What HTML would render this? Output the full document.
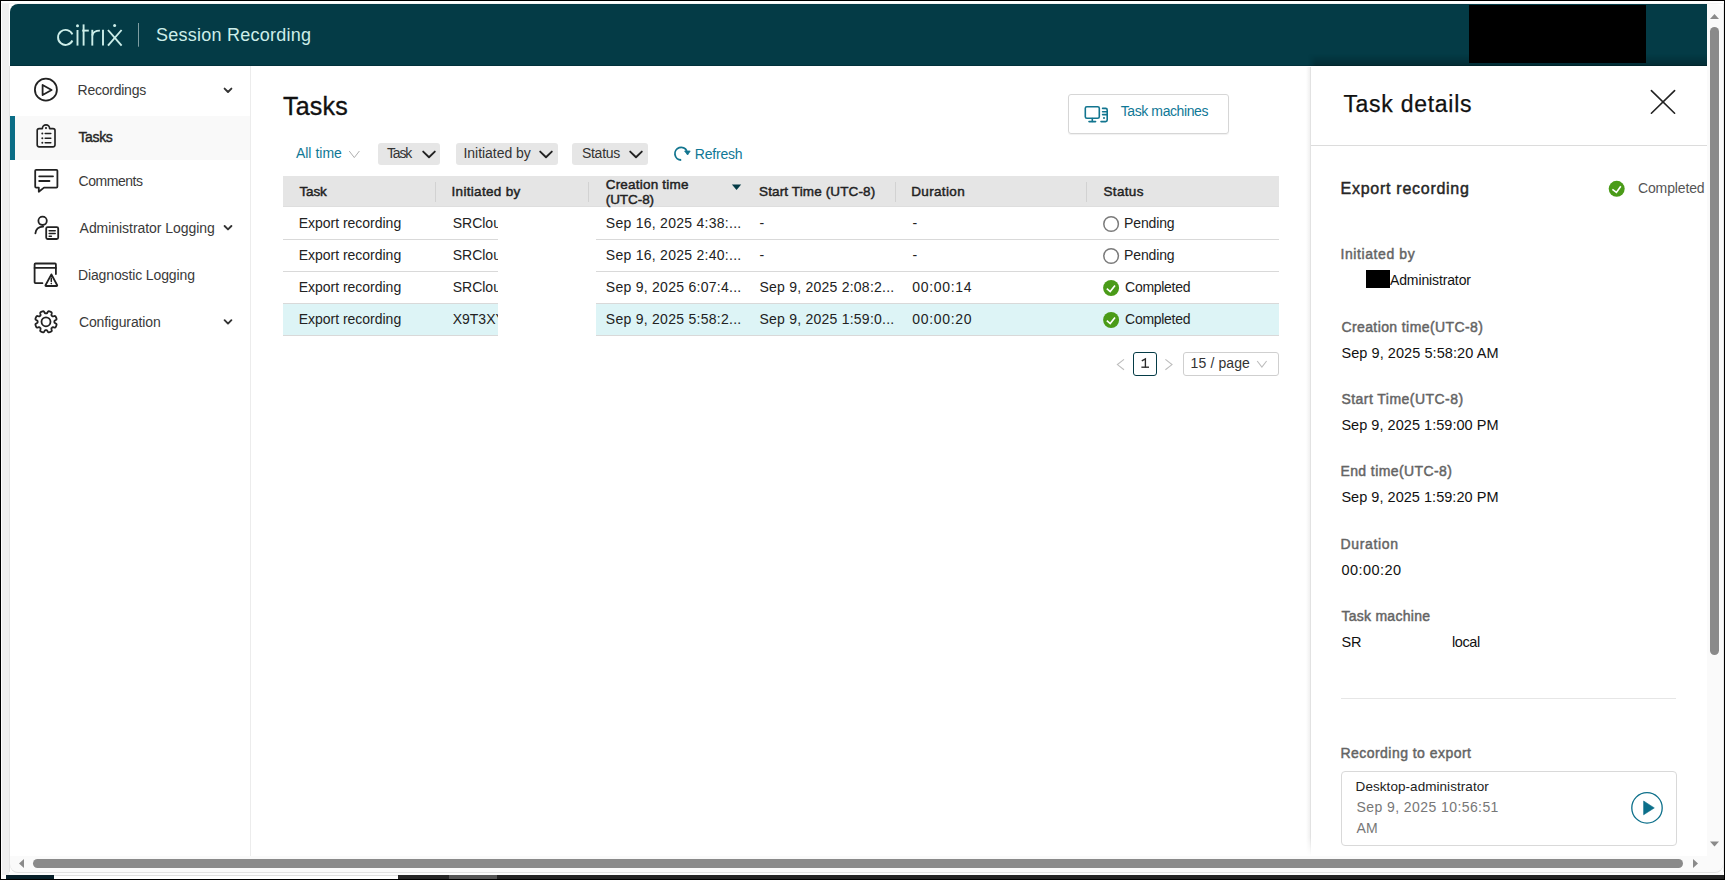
<!DOCTYPE html>
<html><head><meta charset="utf-8">
<style>
*{margin:0;padding:0;box-sizing:border-box}
html,body{width:1725px;height:880px;overflow:hidden;background:#fff;font-family:"Liberation Sans",sans-serif;color:#222}
.a{position:absolute}
.bt{position:absolute;white-space:nowrap;line-height:1;font-family:"Liberation Sans",sans-serif}
.clip{position:absolute;overflow:hidden}
svg.ov{position:absolute;left:0;top:0;width:1725px;height:880px;overflow:visible}
</style></head><body>
<!-- ===== outer frame ===== -->
<div class="a" style="left:0;top:0;width:1725px;height:1px;background:#000"></div>
<div class="a" style="left:0;top:0;width:1px;height:880px;background:#000"></div>
<div class="a" style="left:1724px;top:0;width:1px;height:880px;background:#000"></div>
<div class="a" style="left:2px;top:3px;width:7px;height:872px;background:#f0f0f0"></div>
<div class="a" style="left:9px;top:66px;width:1px;height:806px;background:#e4e4e4"></div>
<div class="a" style="left:1px;top:3px;width:1723px;height:1px;background:#f4f4f4"></div>
<div class="a" style="left:1723px;top:4px;width:1px;height:868px;background:#e8e8e8"></div>
<!-- bottom taskbar remnants -->
<div class="a" style="left:1px;top:879px;width:1724px;height:1px;background:#000"></div>
<div class="a" style="left:1px;top:875px;width:5px;height:4px;background:#fff"></div>
<div class="a" style="left:6px;top:875px;width:48px;height:4px;background:#071f29"></div>
<div class="a" style="left:54px;top:875px;width:344px;height:4px;background:#fff"></div>
<div class="a" style="left:54px;top:875px;width:344px;height:1px;background:#e0e0e0"></div>
<div class="a" style="left:398px;top:875px;width:51px;height:4px;background:#262626"></div>
<div class="a" style="left:449px;top:875px;width:48px;height:4px;background:#555"></div>
<div class="a" style="left:497px;top:875px;width:1227px;height:4px;background:#232323"></div>
<div class="a" style="left:2px;top:872px;width:1721px;height:3px;background:#fcfcfc"></div>
<div class="a" style="left:2px;top:872px;width:7px;height:3px;background:#f0f0f0"></div>
<!-- ===== header ===== -->
<div class="a" style="left:10px;top:4px;width:1697px;height:62px;background:#043b46;border-top-left-radius:8px"></div>
<div class="a" style="left:10px;top:65px;width:1697px;height:1px;background:#02313b"></div>
<div class="a" style="left:1308px;top:54px;width:399px;height:12px;background:linear-gradient(180deg,rgba(0,0,0,0),rgba(0,0,0,0.25));-webkit-mask-image:linear-gradient(90deg,transparent,#000 8px)"></div>
<div class="a" style="left:1469px;top:5px;width:177px;height:58px;background:#000"></div>

<!-- ===== sidebar ===== -->
<div class="a" style="left:250px;top:66px;width:1px;height:790px;background:#ececec"></div>
<div class="a" style="left:15px;top:116px;width:235px;height:44px;background:#f9f9f9"></div>
<div class="a" style="left:10px;top:116px;width:5px;height:44px;background:#0b6d86"></div>

<!-- ===== main ===== -->
<!-- chips -->
<div class="a" style="left:378px;top:143px;width:62px;height:22px;background:#e6e6e6;border-radius:3px"></div>
<div class="a" style="left:456px;top:143px;width:102px;height:22px;background:#e6e6e6;border-radius:3px"></div>
<div class="a" style="left:572px;top:143px;width:76px;height:22px;background:#e6e6e6;border-radius:3px"></div>
<!-- task machines button -->
<div class="a" style="left:1068px;top:94px;width:161px;height:40px;border:1px solid #d6d6d6;border-radius:3px;box-shadow:0 1px 1px rgba(0,0,0,0.06)"></div>
<!-- table -->
<div class="a" style="left:283px;top:176px;width:996px;height:31px;background:#e5e5e5"></div>
<div class="a" style="left:283px;top:206px;width:996px;height:1px;background:#dedede"></div>
<div class="a" style="left:283px;top:304px;width:996px;height:31px;background:#ddf4f6"></div>
<div class="a" style="left:283px;top:239px;width:996px;height:1px;background:#d9d9d9"></div>
<div class="a" style="left:283px;top:271px;width:996px;height:1px;background:#d9d9d9"></div>
<div class="a" style="left:283px;top:303px;width:996px;height:1px;background:#d9d9d9"></div>
<div class="a" style="left:283px;top:335px;width:996px;height:1px;background:#d9d9d9"></div>
<div class="a" style="left:435px;top:182px;width:1px;height:20px;background:#d2d2d2"></div>
<div class="a" style="left:588px;top:182px;width:1px;height:20px;background:#d2d2d2"></div>
<div class="a" style="left:895px;top:182px;width:1px;height:20px;background:#d2d2d2"></div>
<div class="a" style="left:1086px;top:182px;width:1px;height:20px;background:#d2d2d2"></div>
<!-- redaction white block -->
<div class="a" style="left:498px;top:207px;width:98px;height:130px;background:#fff"></div>
<!-- pagination -->
<div class="a" style="left:1133px;top:352px;width:24px;height:24px;border:1.5px solid #043b46;border-radius:3px"></div>
<div class="a" style="left:1183px;top:352px;width:96px;height:24px;border:1px solid #cfcfcf;border-radius:3px"></div>

<!-- ===== details panel ===== -->
<div class="a" style="left:1306px;top:67px;width:5px;height:789px;-webkit-mask-image:linear-gradient(180deg,#000 770px,transparent 789px)"><div class="a" style="left:0;top:0;width:4px;height:789px;background:linear-gradient(90deg,#fff,#f0f0f0)"></div><div class="a" style="left:4px;top:0;width:1px;height:789px;background:#e2e2e2"></div></div>
<div class="a" style="left:1311px;top:145px;width:396px;height:1px;background:#dcdcdc"></div>
<div class="a" style="left:1366px;top:270px;width:24px;height:18px;background:#000"></div>
<div class="a" style="left:1341px;top:698px;width:335px;height:1px;background:#e6e6e6"></div>
<div class="a" style="left:1341px;top:771px;width:336px;height:75px;border:1px solid #d9d9d9;border-radius:4px"></div>

<span class="bt" style="left:156.00px;top:26px;font-size:18px;font-weight:normal;color:#cdeee9;letter-spacing:0.245px">Session Recording</span>
<span class="bt" style="left:77.60px;top:83px;font-size:14px;font-weight:normal;color:#3a3a3a;letter-spacing:-0.246px">Recordings</span>
<span class="bt" style="left:78.40px;top:130px;font-size:14px;font-weight:normal;color:#262626;letter-spacing:-0.347px;-webkit-text-stroke:0.4px #262626">Tasks</span>
<span class="bt" style="left:78.60px;top:174px;font-size:14px;font-weight:normal;color:#3a3a3a;letter-spacing:-0.483px">Comments</span>
<span class="bt" style="left:79.60px;top:221px;font-size:14px;font-weight:normal;color:#3a3a3a;letter-spacing:-0.050px">Administrator Logging</span>
<span class="bt" style="left:77.90px;top:268px;font-size:14px;font-weight:normal;color:#3a3a3a;letter-spacing:-0.117px">Diagnostic Logging</span>
<span class="bt" style="left:78.90px;top:315px;font-size:14px;font-weight:normal;color:#3a3a3a;letter-spacing:-0.116px">Configuration</span>
<span class="bt" style="left:283.10px;top:94px;font-size:25px;font-weight:normal;color:#111;letter-spacing:0.174px;-webkit-text-stroke:0.35px #111">Tasks</span>
<span class="bt" style="left:295.90px;top:146px;font-size:14px;font-weight:normal;color:#0f7896;letter-spacing:0.013px">All time</span>
<span class="bt" style="left:386.90px;top:146px;font-size:14px;font-weight:normal;color:#333;letter-spacing:-1.129px">Task</span>
<span class="bt" style="left:463.50px;top:146px;font-size:14px;font-weight:normal;color:#333;letter-spacing:-0.046px">Initiated by</span>
<span class="bt" style="left:581.90px;top:146px;font-size:14px;font-weight:normal;color:#333;letter-spacing:-0.258px">Status</span>
<span class="bt" style="left:694.80px;top:147px;font-size:14px;font-weight:normal;color:#0f7896;letter-spacing:-0.206px">Refresh</span>
<span class="bt" style="left:1120.70px;top:104px;font-size:14px;font-weight:normal;color:#0f7896;letter-spacing:-0.399px">Task machines</span>
<span class="bt" style="left:299.40px;top:185px;font-size:13.5px;font-weight:normal;color:#222;letter-spacing:-0.136px;-webkit-text-stroke:0.45px #222">Task</span>
<span class="bt" style="left:451.50px;top:185px;font-size:13.5px;font-weight:normal;color:#222;letter-spacing:0.323px;-webkit-text-stroke:0.45px #222">Initiated by</span>
<span class="bt" style="left:605.70px;top:178px;font-size:13.5px;font-weight:normal;color:#222;letter-spacing:0.211px;-webkit-text-stroke:0.45px #222">Creation time</span>
<span class="bt" style="left:605.70px;top:193px;font-size:13.5px;font-weight:normal;color:#222;letter-spacing:-0.057px;-webkit-text-stroke:0.45px #222">(UTC-8)</span>
<span class="bt" style="left:759.10px;top:185px;font-size:13.5px;font-weight:normal;color:#222;letter-spacing:0.120px;-webkit-text-stroke:0.45px #222">Start Time (UTC-8)</span>
<span class="bt" style="left:911.20px;top:185px;font-size:13.5px;font-weight:normal;color:#222;letter-spacing:0.354px;-webkit-text-stroke:0.45px #222">Duration</span>
<span class="bt" style="left:1103.50px;top:185px;font-size:13.5px;font-weight:normal;color:#222;letter-spacing:0.336px;-webkit-text-stroke:0.45px #222">Status</span>
<span class="bt" style="left:298.70px;top:216px;font-size:14px;font-weight:normal;color:#222;letter-spacing:-0.015px">Export recording</span>
<div class="clip" style="left:452.70px;top:208px;width:45.30px;height:26px"><span class="bt" style="left:0;top:8px;font-size:14px;color:#222">SRCloud</span></div>
<span class="bt" style="left:605.80px;top:216px;font-size:14px;font-weight:normal;color:#222;letter-spacing:0.270px">Sep 16, 2025 4:38:...</span>
<span class="bt" style="left:759.50px;top:216px;font-size:14px;font-weight:normal;color:#222;letter-spacing:0.000px">-</span>
<span class="bt" style="left:912.50px;top:216px;font-size:14px;font-weight:normal;color:#222;letter-spacing:0.000px">-</span>
<span class="bt" style="left:1124.10px;top:216px;font-size:14px;font-weight:normal;color:#222;letter-spacing:-0.149px">Pending</span>
<span class="bt" style="left:298.70px;top:248px;font-size:14px;font-weight:normal;color:#222;letter-spacing:-0.015px">Export recording</span>
<div class="clip" style="left:452.70px;top:240px;width:45.30px;height:26px"><span class="bt" style="left:0;top:8px;font-size:14px;color:#222">SRCloud</span></div>
<span class="bt" style="left:605.80px;top:248px;font-size:14px;font-weight:normal;color:#222;letter-spacing:0.270px">Sep 16, 2025 2:40:...</span>
<span class="bt" style="left:759.50px;top:248px;font-size:14px;font-weight:normal;color:#222;letter-spacing:0.000px">-</span>
<span class="bt" style="left:912.50px;top:248px;font-size:14px;font-weight:normal;color:#222;letter-spacing:0.000px">-</span>
<span class="bt" style="left:1124.10px;top:248px;font-size:14px;font-weight:normal;color:#222;letter-spacing:-0.149px">Pending</span>
<span class="bt" style="left:298.70px;top:280px;font-size:14px;font-weight:normal;color:#222;letter-spacing:-0.015px">Export recording</span>
<div class="clip" style="left:452.70px;top:272px;width:45.30px;height:26px"><span class="bt" style="left:0;top:8px;font-size:14px;color:#222">SRCloud</span></div>
<span class="bt" style="left:605.80px;top:280px;font-size:14px;font-weight:normal;color:#222;letter-spacing:0.270px">Sep 9, 2025 6:07:4...</span>
<span class="bt" style="left:759.40px;top:280px;font-size:14px;font-weight:normal;color:#222;letter-spacing:0.240px">Sep 9, 2025 2:08:2...</span>
<span class="bt" style="left:912.20px;top:280px;font-size:14px;font-weight:normal;color:#222;letter-spacing:0.699px">00:00:14</span>
<span class="bt" style="left:1125.10px;top:280px;font-size:14px;font-weight:normal;color:#222;letter-spacing:-0.290px">Completed</span>
<span class="bt" style="left:298.70px;top:312px;font-size:14px;font-weight:normal;color:#222;letter-spacing:-0.015px">Export recording</span>
<div class="clip" style="left:452.70px;top:304px;width:45.30px;height:26px"><span class="bt" style="left:0;top:8px;font-size:14px;color:#222">X9T3XYZ</span></div>
<span class="bt" style="left:605.80px;top:312px;font-size:14px;font-weight:normal;color:#222;letter-spacing:0.270px">Sep 9, 2025 5:58:2...</span>
<span class="bt" style="left:759.40px;top:312px;font-size:14px;font-weight:normal;color:#222;letter-spacing:0.240px">Sep 9, 2025 1:59:0...</span>
<span class="bt" style="left:912.20px;top:312px;font-size:14px;font-weight:normal;color:#222;letter-spacing:0.699px">00:00:20</span>
<span class="bt" style="left:1125.10px;top:312px;font-size:14px;font-weight:normal;color:#222;letter-spacing:-0.290px">Completed</span>
<span class="bt" style="left:1190.60px;top:356px;font-size:14px;font-weight:normal;color:#333;letter-spacing:0.113px">15 / page</span>
<span class="bt" style="left:1343.40px;top:93px;font-size:23px;font-weight:normal;color:#111;letter-spacing:0.721px;-webkit-text-stroke:0.25px #111">Task details</span>
<span class="bt" style="left:1340.50px;top:181px;font-size:16px;font-weight:normal;color:#262626;letter-spacing:0.734px;-webkit-text-stroke:0.45px #262626">Export recording</span>
<span class="bt" style="left:1638.00px;top:181px;font-size:14px;font-weight:normal;color:#555;letter-spacing:-0.140px">Completed</span>
<span class="bt" style="left:1340.40px;top:247px;font-size:14px;font-weight:normal;color:#646464;letter-spacing:0.599px;-webkit-text-stroke:0.45px #646464">Initiated by</span>
<span class="bt" style="left:1390.00px;top:273px;font-size:14px;font-weight:normal;color:#111;letter-spacing:-0.126px">Administrator</span>
<span class="bt" style="left:1341.40px;top:320px;font-size:14px;font-weight:normal;color:#646464;letter-spacing:0.403px;-webkit-text-stroke:0.45px #646464">Creation time(UTC-8)</span>
<span class="bt" style="left:1341.40px;top:346px;font-size:14.5px;font-weight:normal;color:#111;letter-spacing:0.071px">Sep 9, 2025 5:58:20 AM</span>
<span class="bt" style="left:1341.40px;top:392px;font-size:14px;font-weight:normal;color:#646464;letter-spacing:0.461px;-webkit-text-stroke:0.45px #646464">Start Time(UTC-8)</span>
<span class="bt" style="left:1341.40px;top:418px;font-size:14.5px;font-weight:normal;color:#111;letter-spacing:0.037px">Sep 9, 2025 1:59:00 PM</span>
<span class="bt" style="left:1340.40px;top:464px;font-size:14px;font-weight:normal;color:#646464;letter-spacing:0.412px;-webkit-text-stroke:0.45px #646464">End time(UTC-8)</span>
<span class="bt" style="left:1341.40px;top:490px;font-size:14.5px;font-weight:normal;color:#111;letter-spacing:0.033px">Sep 9, 2025 1:59:20 PM</span>
<span class="bt" style="left:1340.40px;top:537px;font-size:14px;font-weight:normal;color:#646464;letter-spacing:0.681px;-webkit-text-stroke:0.45px #646464">Duration</span>
<span class="bt" style="left:1341.40px;top:563px;font-size:14.5px;font-weight:normal;color:#111;letter-spacing:0.460px">00:00:20</span>
<span class="bt" style="left:1341.40px;top:609px;font-size:14px;font-weight:normal;color:#646464;letter-spacing:0.272px;-webkit-text-stroke:0.45px #646464">Task machine</span>
<span class="bt" style="left:1341.40px;top:635px;font-size:14.5px;font-weight:normal;color:#111;letter-spacing:0.000px">SR</span>
<span class="bt" style="left:1452.00px;top:635px;font-size:14.5px;font-weight:normal;color:#111;letter-spacing:-0.400px">local</span>
<span class="bt" style="left:1340.40px;top:746px;font-size:14px;font-weight:normal;color:#646464;letter-spacing:0.467px;-webkit-text-stroke:0.45px #646464">Recording to export</span>
<span class="bt" style="left:1355.60px;top:780px;font-size:13.5px;font-weight:normal;color:#222;letter-spacing:0.057px">Desktop-administrator</span>
<span class="bt" style="left:1356.60px;top:800px;font-size:14px;font-weight:normal;color:#777;letter-spacing:0.415px">Sep 9, 2025 10:56:51</span>
<span class="bt" style="left:1356.60px;top:821px;font-size:14px;font-weight:normal;color:#777;letter-spacing:0.000px">AM</span>

<!-- ===== scrollbars ===== -->
<div class="a" style="left:1707px;top:4px;width:16px;height:852px;background:#fafafa;border-top-right-radius:8px"></div>
<div class="a" style="left:1710px;top:27px;width:9px;height:628px;background:#8a8a8a;border-radius:4.5px"></div>
<div class="a" style="left:10px;top:856px;width:1713px;height:16px;background:#fafafa;border-bottom-left-radius:8px;border-bottom-right-radius:8px;box-shadow:0 1px 0 #e2e2e2"></div>
<div class="a" style="left:33px;top:859px;width:1650px;height:9px;background:#8a8a8a;border-radius:4.5px"></div>

<svg class="ov" viewBox="0 0 1725 880">
 <!-- citrix logo -->
 <g fill="none" stroke="#cdeee9" stroke-width="1.9" stroke-linecap="butt">
  <path d="M72.4,34.3 A7.5,7.5 0 1 0 72.4,40.5"/>
  <line x1="77.5" y1="30" x2="77.5" y2="45.6"/>
  <line x1="83.6" y1="24.4" x2="83.6" y2="45.6"/>
  <line x1="82.2" y1="30.6" x2="88.8" y2="30.6"/>
  <line x1="92.3" y1="29.8" x2="92.3" y2="45.6"/>
  <path d="M92.3,35.5 Q93.2,30.6 99.9,30.6"/>
  <line x1="103" y1="29.8" x2="103" y2="45.6"/>
  <line x1="108" y1="30" x2="121.6" y2="45.6"/>
  <line x1="121.6" y1="30" x2="108" y2="45.6"/>
 </g>
 <circle cx="77.5" cy="25.8" r="1.5" fill="#cdeee9"/>
 <circle cx="114.6" cy="25.6" r="1.5" fill="#cdeee9"/>
 <line x1="138.5" y1="23" x2="138.5" y2="46.7" stroke="#7e9da2" stroke-width="1"/>

 <!-- sidebar icons -->
 <g fill="none" stroke="#222" stroke-width="1.8" stroke-linejoin="round" stroke-linecap="round">
  <circle cx="45.9" cy="89.7" r="11"/>
  <path d="M42.6,85 L51.6,90 L42.6,95 Z"/>
  <!-- clipboard -->
  <path d="M42.4,128.6 H39.2 Q37.2,128.6 37.2,130.6 V144.8 Q37.2,146.8 39.2,146.8 H53 Q55,146.8 55,144.8 V130.6 Q55,128.6 53,128.6 H49.6 V128.4 A3.6,3.6 0 0 0 42.4,128.4 Z" stroke-width="1.65"/>
  <line x1="45.2" y1="133.6" x2="50.8" y2="133.6" stroke-width="1.5"/>
  <line x1="45.2" y1="138.2" x2="50.8" y2="138.2" stroke-width="1.5"/>
  <line x1="45.2" y1="142.7" x2="50.8" y2="142.7" stroke-width="1.5"/>
 <!-- comments -->
  <path d="M36.2,169.8 H56.4 Q57.4,169.8 57.4,170.8 V186.6 Q57.4,187.6 56.4,187.6 H44 L38.8,191.8 V187.6 H36.2 Q35.2,187.6 35.2,186.6 V170.8 Q35.2,169.8 36.2,169.8 Z"/>
  <line x1="39.2" y1="176.3" x2="53" y2="176.3"/>
  <line x1="39.2" y1="181" x2="49.5" y2="181"/>
  <!-- admin logging -->
  <circle cx="42.6" cy="220.8" r="4.2"/>
  <path d="M35.4,233.4 Q36,226.8 43.2,226.6"/>
  <rect x="46.2" y="227.2" width="12" height="11.8" rx="1.4"/>
  <line x1="49.2" y1="230.8" x2="55.2" y2="230.8" stroke-width="1.5"/>
  <line x1="49.2" y1="233.6" x2="55.2" y2="233.6" stroke-width="1.5"/>
  <line x1="49.2" y1="236.2" x2="51.4" y2="236.2" stroke-width="1.5"/>
  <!-- diagnostic -->
  <path d="M42.4,283.2 H35.5 Q34.6,283.2 34.6,282.3 V264.4 Q34.6,263.5 35.5,263.5 H55 Q55.9,263.5 55.9,264.4 V274"/>
  <line x1="34.6" y1="267.9" x2="55.9" y2="267.9"/>
  <path d="M51.4,274.4 L57.2,285.2 Q57.4,286 56.6,286 H46 Q45.2,286 45.5,285.2 Z"/>
  <line x1="51.3" y1="278" x2="51.3" y2="281.6" stroke-width="1.5"/>
 </g>
 <circle cx="51.3" cy="283.6" r="0.8" fill="#222"/>
 <g fill="#222"><circle cx="46" cy="128.1" r="1.05"/><circle cx="42.3" cy="133.6" r="1"/><circle cx="42.3" cy="138.2" r="1"/><circle cx="42.3" cy="142.7" r="1"/></g>
 <!-- gear -->
 <g transform="translate(46,321.8)" fill="none" stroke="#222" stroke-width="1.8" stroke-linejoin="round">
  <path d="M8.35,0.00 L8.36,0.15 L8.36,0.29 L8.37,0.44 L8.39,0.59 L8.44,0.74 L8.53,0.90 L8.69,1.07 L8.95,1.26 L9.33,1.48 L9.76,1.72 L10.15,1.97 L10.40,2.21 L10.53,2.43 L10.58,2.64 L10.57,2.83 L10.55,3.02 L10.50,3.21 L10.45,3.40 L10.39,3.58 L10.33,3.76 L10.27,3.94 L10.20,4.12 L10.12,4.30 L10.04,4.47 L9.96,4.65 L9.88,4.82 L9.79,4.99 L9.70,5.16 L9.59,5.32 L9.48,5.47 L9.34,5.61 L9.16,5.73 L8.92,5.79 L8.57,5.78 L8.12,5.69 L7.64,5.55 L7.22,5.44 L6.90,5.39 L6.66,5.40 L6.49,5.45 L6.35,5.52 L6.23,5.61 L6.12,5.71 L6.01,5.80 L5.91,5.91 L5.80,6.01 L5.71,6.12 L5.61,6.23 L5.52,6.35 L5.45,6.49 L5.40,6.66 L5.39,6.90 L5.44,7.22 L5.55,7.64 L5.69,8.12 L5.78,8.57 L5.79,8.92 L5.73,9.16 L5.61,9.34 L5.47,9.48 L5.32,9.59 L5.16,9.70 L4.99,9.79 L4.82,9.88 L4.65,9.96 L4.47,10.04 L4.30,10.12 L4.12,10.20 L3.94,10.27 L3.76,10.33 L3.58,10.39 L3.40,10.45 L3.21,10.50 L3.02,10.55 L2.83,10.57 L2.64,10.58 L2.43,10.53 L2.21,10.40 L1.97,10.15 L1.72,9.76 L1.48,9.33 L1.26,8.95 L1.07,8.69 L0.90,8.53 L0.74,8.44 L0.59,8.39 L0.44,8.37 L0.29,8.36 L0.15,8.36 L0.00,8.35 L-0.15,8.36 L-0.29,8.36 L-0.44,8.37 L-0.59,8.39 L-0.74,8.44 L-0.90,8.53 L-1.07,8.69 L-1.26,8.95 L-1.48,9.33 L-1.72,9.76 L-1.97,10.15 L-2.21,10.40 L-2.43,10.53 L-2.64,10.58 L-2.83,10.57 L-3.02,10.55 L-3.21,10.50 L-3.40,10.45 L-3.58,10.39 L-3.76,10.33 L-3.94,10.27 L-4.12,10.20 L-4.30,10.12 L-4.47,10.04 L-4.65,9.96 L-4.82,9.88 L-4.99,9.79 L-5.16,9.70 L-5.32,9.59 L-5.47,9.48 L-5.61,9.34 L-5.73,9.16 L-5.79,8.92 L-5.78,8.57 L-5.69,8.12 L-5.55,7.64 L-5.44,7.22 L-5.39,6.90 L-5.40,6.66 L-5.45,6.49 L-5.52,6.35 L-5.61,6.23 L-5.71,6.12 L-5.80,6.01 L-5.91,5.91 L-6.01,5.80 L-6.12,5.71 L-6.23,5.61 L-6.35,5.52 L-6.49,5.45 L-6.66,5.40 L-6.90,5.39 L-7.22,5.44 L-7.64,5.55 L-8.12,5.69 L-8.57,5.78 L-8.92,5.79 L-9.16,5.73 L-9.34,5.61 L-9.48,5.47 L-9.59,5.32 L-9.70,5.16 L-9.79,4.99 L-9.88,4.82 L-9.96,4.65 L-10.04,4.47 L-10.12,4.30 L-10.20,4.12 L-10.27,3.94 L-10.33,3.76 L-10.39,3.58 L-10.45,3.40 L-10.50,3.21 L-10.55,3.02 L-10.57,2.83 L-10.58,2.64 L-10.53,2.43 L-10.40,2.21 L-10.15,1.97 L-9.76,1.72 L-9.33,1.48 L-8.95,1.26 L-8.69,1.07 L-8.53,0.90 L-8.44,0.74 L-8.39,0.59 L-8.37,0.44 L-8.36,0.29 L-8.36,0.15 L-8.35,0.00 L-8.36,-0.15 L-8.36,-0.29 L-8.37,-0.44 L-8.39,-0.59 L-8.44,-0.74 L-8.53,-0.90 L-8.69,-1.07 L-8.95,-1.26 L-9.33,-1.48 L-9.76,-1.72 L-10.15,-1.97 L-10.40,-2.21 L-10.53,-2.43 L-10.58,-2.64 L-10.57,-2.83 L-10.55,-3.02 L-10.50,-3.21 L-10.45,-3.40 L-10.39,-3.58 L-10.33,-3.76 L-10.27,-3.94 L-10.20,-4.12 L-10.12,-4.30 L-10.04,-4.47 L-9.96,-4.65 L-9.88,-4.82 L-9.79,-4.99 L-9.70,-5.16 L-9.59,-5.32 L-9.48,-5.47 L-9.34,-5.61 L-9.16,-5.73 L-8.92,-5.79 L-8.57,-5.78 L-8.12,-5.69 L-7.64,-5.55 L-7.22,-5.44 L-6.90,-5.39 L-6.66,-5.40 L-6.49,-5.45 L-6.35,-5.52 L-6.23,-5.61 L-6.12,-5.71 L-6.01,-5.80 L-5.91,-5.91 L-5.80,-6.01 L-5.71,-6.12 L-5.61,-6.23 L-5.52,-6.35 L-5.45,-6.49 L-5.40,-6.66 L-5.39,-6.90 L-5.44,-7.22 L-5.55,-7.64 L-5.69,-8.12 L-5.78,-8.57 L-5.79,-8.92 L-5.73,-9.16 L-5.61,-9.34 L-5.47,-9.48 L-5.32,-9.59 L-5.16,-9.70 L-4.99,-9.79 L-4.82,-9.88 L-4.65,-9.96 L-4.47,-10.04 L-4.30,-10.12 L-4.12,-10.20 L-3.94,-10.27 L-3.76,-10.33 L-3.58,-10.39 L-3.40,-10.45 L-3.21,-10.50 L-3.02,-10.55 L-2.83,-10.57 L-2.64,-10.58 L-2.43,-10.53 L-2.21,-10.40 L-1.97,-10.15 L-1.72,-9.76 L-1.48,-9.33 L-1.26,-8.95 L-1.07,-8.69 L-0.90,-8.53 L-0.74,-8.44 L-0.59,-8.39 L-0.44,-8.37 L-0.29,-8.36 L-0.15,-8.36 L-0.00,-8.35 L0.15,-8.36 L0.29,-8.36 L0.44,-8.37 L0.59,-8.39 L0.74,-8.44 L0.90,-8.53 L1.07,-8.69 L1.26,-8.95 L1.48,-9.33 L1.72,-9.76 L1.97,-10.15 L2.21,-10.40 L2.43,-10.53 L2.64,-10.58 L2.83,-10.57 L3.02,-10.55 L3.21,-10.50 L3.40,-10.45 L3.58,-10.39 L3.76,-10.33 L3.94,-10.27 L4.12,-10.20 L4.30,-10.12 L4.47,-10.04 L4.65,-9.96 L4.82,-9.88 L4.99,-9.79 L5.16,-9.70 L5.32,-9.59 L5.47,-9.48 L5.61,-9.34 L5.73,-9.16 L5.79,-8.92 L5.78,-8.57 L5.69,-8.12 L5.55,-7.64 L5.44,-7.22 L5.39,-6.90 L5.40,-6.66 L5.45,-6.49 L5.52,-6.35 L5.61,-6.23 L5.71,-6.12 L5.80,-6.01 L5.91,-5.91 L6.01,-5.80 L6.12,-5.71 L6.23,-5.61 L6.35,-5.52 L6.49,-5.45 L6.66,-5.40 L6.90,-5.39 L7.22,-5.44 L7.64,-5.55 L8.12,-5.69 L8.57,-5.78 L8.92,-5.79 L9.16,-5.73 L9.34,-5.61 L9.48,-5.47 L9.59,-5.32 L9.70,-5.16 L9.79,-4.99 L9.88,-4.82 L9.96,-4.65 L10.04,-4.47 L10.12,-4.30 L10.20,-4.12 L10.27,-3.94 L10.33,-3.76 L10.39,-3.58 L10.45,-3.40 L10.50,-3.21 L10.55,-3.02 L10.57,-2.83 L10.58,-2.64 L10.53,-2.43 L10.40,-2.21 L10.15,-1.97 L9.76,-1.72 L9.33,-1.48 L8.95,-1.26 L8.69,-1.07 L8.53,-0.90 L8.44,-0.74 L8.39,-0.59 L8.37,-0.44 L8.36,-0.29 L8.36,-0.15 Z"/>
  <circle cx="0" cy="0" r="4.5"/>
 </g>
 <!-- sidebar chevrons -->
 <g fill="none" stroke="#333" stroke-width="1.9" stroke-linecap="round" stroke-linejoin="round">
  <path d="M224.6,88.6 L228,92 L231.4,88.6"/>
  <path d="M224.6,226 L228,229.4 L231.4,226"/>
  <path d="M224.6,320.2 L228,323.6 L231.4,320.2"/>
 </g>

 <!-- filters -->
 <path d="M349.2,151 L354.3,157.6 L359.4,151" fill="none" stroke="#b0b0b0" stroke-width="1"/>
 <g fill="none" stroke="#222" stroke-width="1.9" stroke-linecap="round" stroke-linejoin="round">
  <path d="M423.2,151.6 L429,157.2 L434.8,151.6"/>
  <path d="M540.2,151.6 L546,157.2 L551.8,151.6"/>
  <path d="M630.2,151.6 L636,157.2 L641.8,151.6"/>
 </g>
 <!-- refresh -->
 <path d="M681.2,160 A6.3,6.3 0 1 1 686.8,150.8" fill="none" stroke="#12758f" stroke-width="1.8"/>
 <path d="M684.6,151 L690.2,151 L687.6,155 Z" fill="#12758f" stroke="#12758f" stroke-width="0.8" stroke-linejoin="round"/>

 <!-- task machines icon -->
 <g fill="none" stroke="#12758f" stroke-width="1.6" stroke-linecap="round" stroke-linejoin="round">
  <rect x="1085.3" y="106.7" width="14" height="11.6" rx="1.6"/>
  <line x1="1092.3" y1="118.6" x2="1092.3" y2="121.4"/>
  <line x1="1089" y1="121.6" x2="1095.6" y2="121.6"/>
  <path d="M1102.6,108.4 H1105.6 Q1107.2,108.4 1107.2,110 V120 Q1107.2,121.6 1105.6,121.6 H1101"/>
  <line x1="1102.6" y1="111.8" x2="1106.8" y2="111.8"/>
  <line x1="1102.6" y1="114.6" x2="1106.8" y2="114.6"/>
 </g>
 <circle cx="1104" cy="118" r="1" fill="#12758f"/>

 <!-- sort triangle -->
 <path d="M731.9,184.5 L741.2,184.5 L736.55,190 Z" fill="#043b46"/>

 <!-- status icons -->
 <circle cx="1111.1" cy="224" r="7.3" fill="none" stroke="#7a7a7a" stroke-width="1.5"/>
 <circle cx="1111.1" cy="256" r="7.3" fill="none" stroke="#7a7a7a" stroke-width="1.5"/>
 <circle cx="1111.1" cy="288" r="8" fill="#4a9b18"/>
 <circle cx="1111.1" cy="320" r="8" fill="#4a9b18"/>
 <path d="M1106.8,288.6 L1110.2,291.6 L1115,285.4" fill="none" stroke="#fff" stroke-width="1.6"/>
 <path d="M1106.8,320.6 L1110.2,323.6 L1115,317.4" fill="none" stroke="#fff" stroke-width="1.6"/>

 <!-- pagination "1" -->
 <g fill="none" stroke="#2a2a2a" stroke-width="1.35">
  <path d="M1141.8,360.9 L1145.4,358.9 V367.4"/>
  <line x1="1141.4" y1="367.2" x2="1149" y2="367.2"/>
 </g>
 <!-- pagination arrows -->
 <path d="M1124,359.4 L1117.4,364.6 L1124,369.8" fill="none" stroke="#bdbdbd" stroke-width="1.1"/>
 <path d="M1165.4,359.4 L1172,364.6 L1165.4,369.8" fill="none" stroke="#bdbdbd" stroke-width="1.1"/>
 <path d="M1257.2,361 L1261.9,367 L1266.6,361" fill="none" stroke="#bdbdbd" stroke-width="1.1"/>

 <!-- details -->
 <g stroke="#222" stroke-width="1.6" stroke-linecap="round">
  <line x1="1651.4" y1="90.6" x2="1674.6" y2="113.2"/>
  <line x1="1674.6" y1="90.6" x2="1651.4" y2="113.2"/>
 </g>
 <circle cx="1616.7" cy="188.8" r="8" fill="#4a9b18"/>
 <path d="M1612.4,189.4 L1616.4,192.4 L1620.8,186.2" fill="none" stroke="#fff" stroke-width="1.6"/>
 <circle cx="1647" cy="807.9" r="15.2" fill="none" stroke="#0c6f8a" stroke-width="1.3"/>
 <path d="M1643.6,801 L1654.3,807.9 L1643.6,814.8 Z" fill="#0c6f8a" stroke="#0c6f8a" stroke-width="0.6" stroke-linejoin="round"/>

 <!-- scroll arrows -->
 <path d="M1710,19 L1714.5,14 L1719,19 Z" fill="#8a8a8a"/>
 <path d="M1710,841.5 L1714.5,846.5 L1719,841.5 Z" fill="#8a8a8a"/>
 <path d="M24,859 L19,863.5 L24,868 Z" fill="#8a8a8a"/>
 <path d="M1693,859 L1698,863.5 L1693,868 Z" fill="#8a8a8a"/>
</svg>

</body></html>
